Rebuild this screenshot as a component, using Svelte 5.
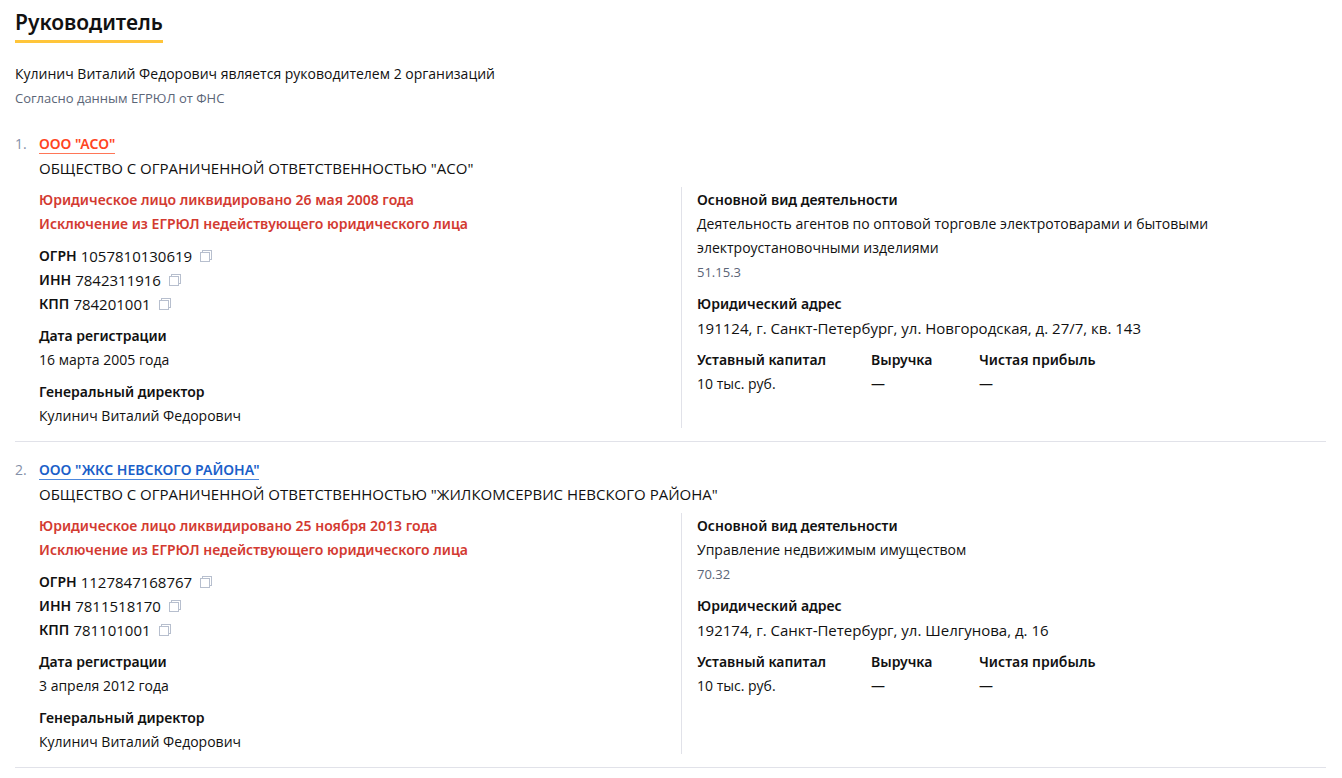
<script>
  const companies = [
    {
      name: 'ООО "АСО"',
      active: true,
      fullName: 'ОБЩЕСТВО С ОГРАНИЧЕННОЙ ОТВЕТСТВЕННОСТЬЮ "АСО"',
      status: 'Юридическое лицо ликвидировано 26 мая 2008 года',
      codes: [['ОГРН', '1057810130619'], ['ИНН', '7842311916'], ['КПП', '784201001']],
      registered: '16 марта 2005 года',
      activity: 'Деятельность агентов по оптовой торговле электротоварами и бытовыми электроустановочными изделиями',
      activityCode: '51.15.3',
      address: '191124, г. Санкт-Петербург, ул. Новгородская, д. 27/7, кв. 143'
    },
    {
      name: 'ООО "ЖКС НЕВСКОГО РАЙОНА"',
      active: false,
      fullName: 'ОБЩЕСТВО С ОГРАНИЧЕННОЙ ОТВЕТСТВЕННОСТЬЮ "ЖИЛКОМСЕРВИС НЕВСКОГО РАЙОНА"',
      status: 'Юридическое лицо ликвидировано 25 ноября 2013 года',
      codes: [['ОГРН', '1127847168767'], ['ИНН', '7811518170'], ['КПП', '781101001']],
      registered: '3 апреля 2012 года',
      activity: 'Управление недвижимым имуществом',
      activityCode: '70.32',
      address: '192174, г. Санкт-Петербург, ул. Шелгунова, д. 16'
    }
  ];
  const reason = 'Исключение из ЕГРЮЛ недействующего юридического лица';
  const director = 'Кулинич Виталий Федорович';

  function copy(value) {
    navigator.clipboard?.writeText(value);
  }
</script>

<main>
  <h1>Руководитель</h1>
  <p class="intro">{director} является руководителем 2 организаций</p>
  <p class="small">Согласно данным ЕГРЮЛ от ФНС</p>

  <ol>
    {#each companies as company, i}
      <li>
        <span class="number">{i + 1}.</span>
        <article>
          <h2><a href="#company" class:active={company.active}>{company.name}</a></h2>
          <p class="formal">{company.fullName}</p>
          <div class="columns">
            <div class="left">
              <div class="status">
                <p>{company.status}</p>
                <p>{reason}</p>
              </div>
              <dl class="codes">
                {#each company.codes as [label, value]}
                  <div>
                    <dt>{label}</dt>
                    <dd class="formal">{value}</dd>
                    <button type="button" aria-label="Скопировать {label}" onclick={() => copy(value)}>
                      <svg width="12" height="12" viewBox="0 0 12 12" fill="none" stroke="#b7bfce" shape-rendering="crispEdges">
                        <path d="M.5 2.5h9v9h-9zM2.5 2.5v-2h9v9h-2" />
                      </svg>
                    </button>
                  </div>
                {/each}
              </dl>
              <dl>
                <dt>Дата регистрации</dt>
                <dd>{company.registered}</dd>
              </dl>
              <dl>
                <dt>Генеральный директор</dt>
                <dd>{director}</dd>
              </dl>
            </div>
            <div class="right">
              <dl>
                <dt>Основной вид деятельности</dt>
                <dd>{company.activity}</dd>
                <dd class="small">{company.activityCode}</dd>
              </dl>
              <dl>
                <dt>Юридический адрес</dt>
                <dd class="formal">{company.address}</dd>
              </dl>
              <dl class="finance">
                <div><dt>Уставный капитал</dt><dd>10 тыс. руб.</dd></div>
                <div><dt>Выручка</dt><dd>—</dd></div>
                <div><dt>Чистая прибыль</dt><dd>—</dd></div>
              </dl>
            </div>
          </div>
        </article>
      </li>
    {/each}
  </ol>
</main>

<style>
  :global(body) {
    margin: 0;
    background: #fff;
  }
  main {
    padding: 6px 16px 0 15px;
    color: #111;
    font-family: "Open Sans", "Noto Sans", sans-serif;
    font-size: 14px;
    line-height: 24px;
  }
  h1, h2, p, ol, dl, dd {
    margin: 0;
    padding: 0;
  }
  h1, h2, dt, .status {
    font-family: "Noto Sans", "Open Sans", sans-serif;
    font-weight: 600;
  }
  h1 {
    width: fit-content;
    padding-bottom: 2px;
    border-bottom: 3px solid #ffc53a;
    font-size: 21px;
    line-height: 32px;
  }
  .intro {
    margin-top: 19px;
  }
  .small {
    color: #5b6577;
    font-size: 13px;
  }
  .formal {
    font-size: 15px;
  }
  ol {
    margin-top: 6px;
    list-style: none;
  }
  li {
    display: flex;
    padding: 16px 0 13px;
    border-bottom: 1px solid #e1e2e9;
  }
  .number {
    flex: 0 0 24px;
    color: #8490a8;
  }
  article {
    flex: 1;
    min-width: 0;
  }
  h2 {
    font-size: 14px;
    line-height: 24px;
  }
  a {
    border-bottom: 1px solid #4c88dc;
    color: #1b5fc9;
    text-decoration: none;
  }
  a.active {
    border-color: #ff7657;
    color: #ff4422;
  }
  .columns {
    display: grid;
    grid-template-columns: minmax(0, 1fr) minmax(0, 1fr);
    margin-top: 7px;
    padding-right: 3px;
  }
  .left, .right {
    display: flex;
    flex-direction: column;
    gap: 8px;
    padding-top: 1px;
  }
  .right {
    padding-right: 80px;
    padding-left: 15px;
    border-left: 1px solid #e1e2e9;
  }
  .status {
    color: #d33a31;
  }
  .codes div {
    display: flex;
    align-items: center;
    gap: 4px;
  }
  button {
    display: flex;
    margin-left: 4px;
    padding: 0;
    border: 0;
    background: none;
    cursor: pointer;
  }
  .finance {
    display: grid;
    grid-template-columns: 174px 108px auto;
  }
</style>
